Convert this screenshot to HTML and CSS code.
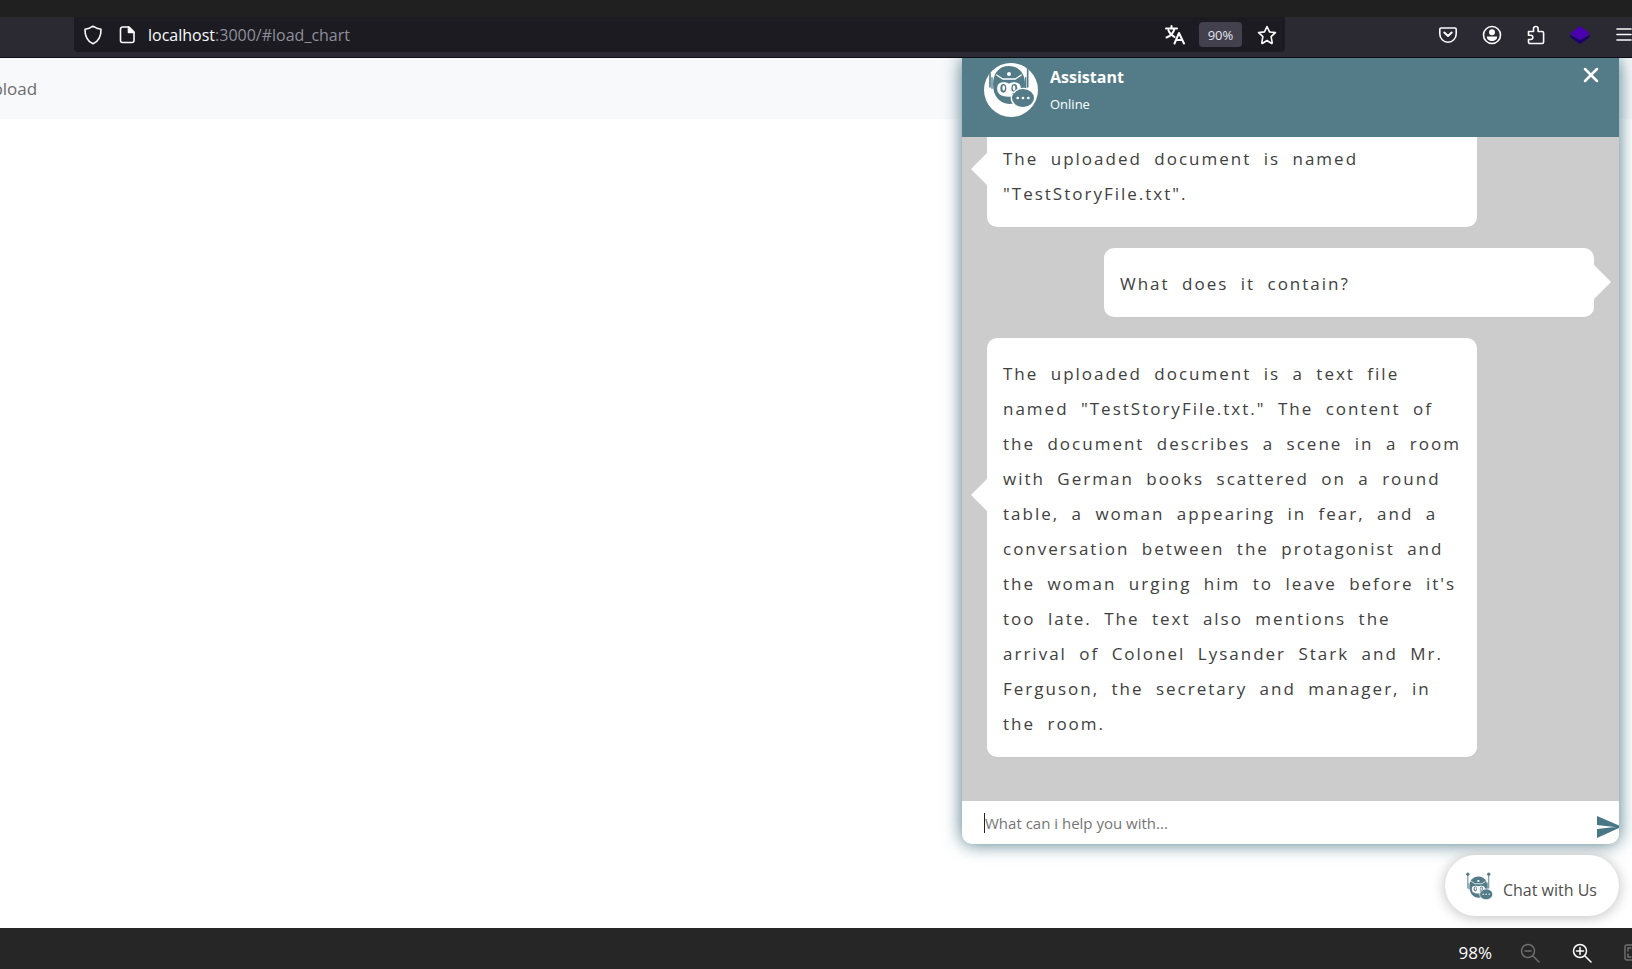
FILE: index.html
```html
<!DOCTYPE html>
<html lang="en">
<head>
<meta charset="utf-8">
<title>Chat assistant</title>
<link rel="stylesheet" href="styles.css">
</head>
<body>
<svg class="defs" aria-hidden="true">
  <symbol id="robot" viewBox="8 -18 146 148" overflow="visible">
    <g fill="none" stroke="#537c88" stroke-width="5" stroke-linecap="round">
      <path d="M18 -8V68M131 -8V68"/>
      <path d="M24 40V72M125 40V72" stroke-width="4"/>
    </g>
    <circle cx="18" cy="-8" r="9" fill="#537c88"/><circle cx="131" cy="-8" r="9" fill="#537c88"/>
    <path d="M75 5C44 5 27 28 27 60c0 36 20 59 50 59 28 0 46-24 46-59C123 28 106 5 75 5z" fill="#537c88"/>
    <path d="M38 32l18 12h38l18-12" fill="none" stroke="#fff" stroke-width="4" stroke-linecap="round" stroke-linejoin="round"/>
    <circle cx="75" cy="29" r="6" fill="#fff"/>
    <path d="M40 67c2-14 22-16 35-9 13-7 33-5 35 9 2 16-3 30-35 30S38 83 40 67z" fill="#fff"/>
    <ellipse cx="58" cy="72" rx="9" ry="13" fill="#537c88"/><ellipse cx="91" cy="72" rx="9" ry="13" fill="#537c88"/>
    <ellipse cx="59" cy="71" rx="4" ry="8" fill="#fff"/><ellipse cx="90" cy="71" rx="4" ry="8" fill="#fff"/>
    <path d="M76 80l14 5c6-8 15-13 27-13 20 0 35 13 35 29s-15 29-35 29-35-13-35-29c0-5 1-9 3-11z" fill="#537c88" stroke="#fff" stroke-width="4"/>
    <g fill="#fff"><circle cx="101" cy="101" r="4"/><circle cx="117" cy="101" r="4"/><circle cx="133" cy="101" r="4"/></g>
  </symbol>
</svg>

<div class="screen">
  <div class="strip"></div>
  <header class="toolbar">
    <div class="address">
      <button class="icon" aria-label="Tracking protection"><svg width="20" height="20" viewBox="0 0 20 20"><path d="M10 1.2C7.500 3 5 3.900 2 4.300 1.700 10.500 4.500 16.500 10 18.800c5.500-2.300 8.300-8.300 8-14.500C15 3.900 12.500 3 10 1.200z"/></svg></button>
      <button class="icon page-icon" aria-label="Site information"><svg width="16" height="20" viewBox="0 0 16 20"><path d="M3.500 2H10l5 5v8.500a2 2 0 0 1-2 2H3.500a2 2 0 0 1-2-2V4a2 2 0 0 1 2-2z"/><path d="M9.500 2v5.500H15z" fill="#fbfbfe"/></svg></button>
      <p class="url"><span>localhost</span>:3000/#load_chart</p>
      <button class="icon" aria-label="Translate page"><svg width="20" height="20" viewBox="0 0 20 20"><path d="M1 3.500h11M6.500 1v2.500M9.500 3.500C8.500 8 5.500 11 1.500 12.500M3.500 5.500c1 3 3.500 5 6 6.500M9.500 18.500L14 8l5 10.500M11.200 15h6" stroke-width="2"/></svg></button>
      <button class="badge">90%</button>
      <button class="icon" aria-label="Bookmark"><svg width="20" height="20" viewBox="0 0 20 20"><path d="M10 1.500l2.500 5.400 5.900.7-4.300 4.100 1.100 5.900c.1.700-.3.900-.9.600L10 15.500l-4.300 2.700c-.6.300-1 .1-.9-.6l1.100-5.900L1.600 7.600l5.900-.7z"/></svg></button>
    </div>
    <div class="tools">
      <button class="icon" aria-label="Pocket"><svg width="20" height="20" viewBox="0 0 20 20"><path d="M3 3h14c.8 0 1.200.5 1.200 1.200V9A8.200 8.200 0 0 1 1.800 9V4.200C1.800 3.500 2.200 3 3 3z"/><path d="M6.300 7.500L10 11l3.700-3.500" stroke-width="2"/></svg></button>
      <button class="icon" aria-label="Account"><svg width="20" height="20" viewBox="0 0 20 20"><circle cx="10" cy="10" r="8.500"/><circle cx="10" cy="7.300" r="3" fill="#fbfbfe" stroke="none"/><path d="M4.800 11.500h10.400c0 2.800-2.200 4.500-5.200 4.500s-5.200-1.700-5.200-4.500z" fill="#fbfbfe" stroke="none"/></svg></button>
      <button class="icon" aria-label="Extensions"><svg width="20" height="20" viewBox="0 0 20 20"><path d="M2.500 6.500h5V3.800a2.300 2.300 0 0 1 4.600 0v2.700h4a1.500 1.500 0 0 1 1.500 1.500v9a1.500 1.500 0 0 1-1.500 1.500h-12A1.500 1.500 0 0 1 2.500 17v-2.500h2.200a2 2 0 0 0 0-4.300H2.500z"/></svg></button>
      <button class="icon" aria-label="Layers extension"><svg width="20" height="20" viewBox="0 0 20 20"><path d="M0 10l10 5 10-5v2l-10 7L0 12z" fill="#1c0070" stroke="none"/><path d="M10 1l10 7.500L10 15 0 8.500z" fill="#4a00b0" stroke="none"/></svg></button>
      <button class="icon" aria-label="Menu"><svg width="20" height="20" viewBox="0 0 20 20"><path d="M3 4h14M3 9.500h14M3 15h14"/></svg></button>
    </div>
  </header>

  <main class="page">
    <nav class="nav"><a href="#upload">Upload</a></nav>

    <section class="chat" aria-label="Assistant chat">
      <header class="chat-head">
        <span class="avatar"><svg viewBox="0 0 162 162" width="54" height="54" aria-hidden="true"><use href="#robot" x="8" y="-14" width="146" height="148"/></svg></span>
        <div class="who"><h2>Assistant</h2><p>Online</p></div>
        <button class="close" aria-label="Close"><svg width="16" height="16" viewBox="0 0 16 16"><path d="M2 2l12 12M14 2L2 14" stroke="#fff" stroke-width="2.500" stroke-linecap="round"/></svg></button>
      </header>
      <div class="messages">
        <p class="bubble bot">The uploaded document is named "TestStoryFile.txt".</p>
        <p class="bubble user">What does it contain?</p>
        <p class="bubble bot">The uploaded document is a text file named "TestStoryFile.txt." The content of the document describes a scene in a room with German books scattered on a round table, a woman appearing in fear, and a conversation between the protagonist and the woman urging him to leave before it's too late. The text also mentions the arrival of Colonel Lysander Stark and Mr. Ferguson, the secretary and manager, in the room.</p>
      </div>
      <form class="compose">
        <span class="caret"></span>
        <input type="text" aria-label="Message" placeholder="What can i help you with...">
        <button type="button" aria-label="Send"><svg width="22" height="24" viewBox="0 0 22 24"><path d="M0 1l22 9.500v2L0 10zM0 14l22-2.500v1.500L0 23z" fill="#4a7785"/></svg></button>
      </form>
    </section>

    <button class="launcher"><svg width="27" height="28" aria-hidden="true"><use href="#robot" width="27" height="28"/></svg><span>Chat with Us</span></button>
  </main>

  <footer class="viewer">
    <output>98%</output>
    <button class="dim" aria-label="Zoom out"><svg width="20" height="20" viewBox="0 0 20 20"><circle cx="8" cy="8" r="6.500"/><path d="M13 13l6 6M5 8h6"/></svg></button>
    <button aria-label="Zoom in"><svg width="20" height="20" viewBox="0 0 20 20"><circle cx="8" cy="8" r="6.500"/><path d="M13 13l6 6M4.500 8h7M8 4.500v7"/></svg></button>
    <button class="dim" aria-label="Fit to window"><svg width="20" height="20" viewBox="0 0 20 20"><rect x="1" y="2" width="18" height="15" rx="2"/><path d="M4 8V5h3M4 11v3h3M13 5h3v3M13 14h3v-3"/></svg></button>
  </footer>
</div>
</body>
</html>
```
FILE: styles.css
```css
* { box-sizing: border-box; }
body {
  margin: 0;
  font-family: "Open Sans", "Noto Sans", sans-serif;
  color: #333;
  background: #fff;
}
h2, p { margin: 0; }
button {
  border: 0;
  padding: 0;
  background: none;
  font: inherit;
  color: inherit;
  flex: none;
}
svg { display: block; }
.defs { position: absolute; width: 0; height: 0; }

.screen {
  display: flex;
  flex-direction: column;
  height: 100vh;
  overflow: hidden;
}
.strip { flex: none; height: 17px; background: #202020; }

/* Browser toolbar */
.toolbar {
  flex: none;
  display: flex;
  justify-content: space-between;
  height: 41px;
  padding: 0 0 5px 74px;
  background: #2b2a33;
  border-bottom: 1px solid #0d0c12;
  overflow: hidden;
}
.address {
  display: flex;
  align-items: center;
  flex: 0 1 1211px;
  padding: 0 8px 0 9px;
  background: #1c1b22;
  border-radius: 0 0 4px 4px;
}
.icon svg {
  fill: none;
  stroke: #fbfbfe;
  stroke-width: 1.6;
  stroke-linejoin: round;
  stroke-linecap: round;
}
.page-icon { margin-left: 16px; }
.url {
  flex: 1;
  margin-left: 13px;
  font-size: 16px;
  color: #8f8f9b;
}
.url span { color: #fbfbfe; }
.badge {
  width: 43px;
  height: 25px;
  margin: 0 15px 0 14px;
  border-radius: 4px;
  background: #42414d;
  color: #e4e4ee;
  font-size: 13px;
}
.tools {
  display: flex;
  align-items: center;
  gap: 24px;
  margin-right: -2px;
}

/* Page under the toolbar */
.page { flex: 1; position: relative; min-height: 0; background: #fff; overflow: hidden; }
.nav {
  display: flex;
  align-items: center;
  height: 61px;
  background: #f8f9fb;
}
.nav a {
  margin-left: -20px;
  color: #6c6c6c;
  font-size: 17px;
  text-decoration: none;
}

/* Chat window floating over the page */
.chat {
  position: absolute;
  top: 0;
  right: 13px;
  bottom: 84px;
  width: 657px;
  display: flex;
  flex-direction: column;
  background: #ccc;
  border-radius: 0 0 10px 10px;
  box-shadow: 0 0 18px #4a7785;
  overflow: hidden;
}
.chat-head {
  flex: none;
  display: flex;
  align-items: flex-start;
  gap: 12px;
  height: 79px;
  padding: 5px 20px 0 22px;
  background: #537c88;
  color: #fff;
}
.avatar {
  flex: none;
  width: 54px;
  height: 54px;
  border-radius: 50%;
  background: #fff;
  overflow: hidden;
}
.who { flex: 1; }
.who h2 { font-size: 16px; line-height: 28px; font-weight: 700; }
.who p { font-size: 13px; line-height: 26px; }
.close { margin-top: 4px; }

.messages {
  flex: 1;
  min-height: 0;
  display: flex;
  flex-direction: column;
  justify-content: flex-end;
  gap: 21px;
  padding: 0 25px 44px;
  overflow: hidden;
}
.bubble {
  position: relative;
  flex: none;
  width: 490px;
  padding: 18px 16px 16px;
  border-radius: 10px;
  background: #fff;
  color: #404040;
  font-size: 17px;
  line-height: 35px;
  letter-spacing: 2px;
  word-spacing: 6px;
}
.bubble::before {
  content: "";
  position: absolute;
  top: calc(35% - 2px);
  width: 24px;
  height: 24px;
  background: #fff;
  transform: rotate(45deg);
}
.bot::before { left: -11px; }
.user { align-self: flex-end; }
.user::before { right: -12px; }

.compose {
  flex: none;
  display: flex;
  align-items: center;
  height: 43px;
  padding-left: 22px;
  background: #fff;
}
.caret { width: 1px; height: 20px; background: #222; }
.compose input {
  flex: 1;
  min-width: 0;
  padding: 0;
  border: 0;
  outline: 0;
  background: none;
  font: 15px "Open Sans", "Noto Sans", sans-serif;
}
.compose input::placeholder { color: #757575; opacity: 1; }
.compose button { margin-top: 9px; }

.launcher {
  position: absolute;
  right: 13px;
  bottom: 12px;
  display: flex;
  align-items: center;
  gap: 10px;
  height: 61px;
  padding: 0 22px 0 21px;
  border-radius: 31px;
  background: #fff;
  box-shadow: 0 1px 14px #bbb;
  color: #4f4f4f;
  font-size: 16px;
}
.launcher span { margin-top: 8px; }

/* Image viewer bar */
.viewer {
  flex: none;
  display: flex;
  align-items: center;
  justify-content: flex-end;
  gap: 32px;
  height: 41px;
  padding-top: 8px;
  margin-right: -12px;
  background: #262626;
  color: #fff;
  font-size: 17px;
}
.viewer output { margin-right: -4px; }
.viewer svg { fill: none; stroke: #fff; stroke-width: 1.5; stroke-linecap: round; }
.viewer .dim svg { stroke: #6d6d6d; }
```
